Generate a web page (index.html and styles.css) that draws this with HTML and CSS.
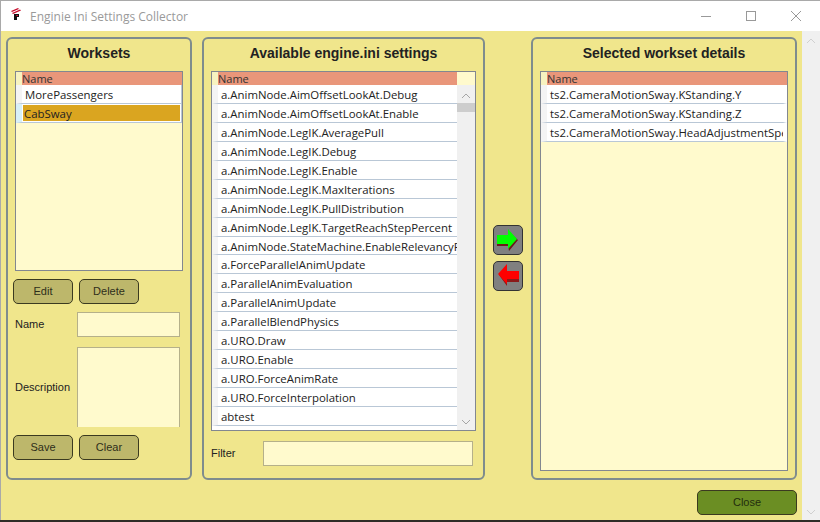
FILE: index.html
```html
<!DOCTYPE html>
<html>
<head>
  <meta name="viewport" content="width=device-width,initial-scale=1.0">
  <title>Enginie Ini Settings Collector</title>
  <link rel="stylesheet" href="styles.css">
</head>
<body>
  <div class="window">
    <div class="titlebar">
      <svg class="app-icon" width="10" height="12" viewBox="0 0 10 12">
        <path d="M0 3 L7 0 L8 1 L1 4 Z M1 5 L9 1.5 L10 2.5 L2 6 Z" fill="#c8102e"/>
        <path d="M3 6 H8 V9 H6 V12 H3 Z" fill="#111"/>
        <path d="M5 7 H7 V8 H5 Z" fill="#c8102e"/>
      </svg>
      <span class="app-title">Enginie Ini Settings Collector</span>
      <div class="caption">
        <svg width="12" height="12" viewBox="0 0 12 12"><path d="M1 6.5 H11" stroke="#999" fill="none"/></svg>
        <svg width="12" height="12" viewBox="0 0 12 12"><rect x="1.5" y="1.5" width="9" height="9" stroke="#999" fill="none"/></svg>
        <svg width="12" height="12" viewBox="0 0 12 12"><path d="M1 1 L11 11 M11 1 L1 11" stroke="#999" fill="none"/></svg>
      </div>
    </div>

    <div class="main">
      <div class="content">
        <div class="panels">
          <section class="panel panel-worksets">
            <h2>Worksets</h2>
            <div class="list list-worksets">
              <div class="list-head"><span>Name</span></div>
              <div class="row">MorePassengers</div>
              <div class="row selected"><span>CabSway</span></div>
            </div>
            <div class="btn-row">
              <button class="btn">Edit</button>
              <button class="btn">Delete</button>
            </div>
            <div class="field">
              <label>Name</label>
              <div class="input"></div>
            </div>
            <div class="field field-desc">
              <label>Description</label>
              <div class="input textarea"></div>
            </div>
            <div class="btn-row">
              <button class="btn">Save</button>
              <button class="btn">Clear</button>
            </div>
          </section>

          <section class="panel panel-available">
            <h2>Available engine.ini settings</h2>
            <div class="list list-available">
              <div class="list-body">
                <div class="list-head"><span>Name</span></div>
                <div class="row">a.AnimNode.AimOffsetLookAt.Debug</div>
                <div class="row">a.AnimNode.AimOffsetLookAt.Enable</div>
                <div class="row">a.AnimNode.LegIK.AveragePull</div>
                <div class="row">a.AnimNode.LegIK.Debug</div>
                <div class="row">a.AnimNode.LegIK.Enable</div>
                <div class="row">a.AnimNode.LegIK.MaxIterations</div>
                <div class="row">a.AnimNode.LegIK.PullDistribution</div>
                <div class="row">a.AnimNode.LegIK.TargetReachStepPercent</div>
                <div class="row">a.AnimNode.StateMachine.EnableRelevancyReset</div>
                <div class="row">a.ForceParallelAnimUpdate</div>
                <div class="row">a.ParallelAnimEvaluation</div>
                <div class="row">a.ParallelAnimUpdate</div>
                <div class="row">a.ParallelBlendPhysics</div>
                <div class="row">a.URO.Draw</div>
                <div class="row">a.URO.Enable</div>
                <div class="row">a.URO.ForceAnimRate</div>
                <div class="row">a.URO.ForceInterpolation</div>
                <div class="row">abtest</div>
              </div>
              <div class="scroll scroll-list">
                <div class="corner"></div>
                <svg class="chev" width="10" height="6" viewBox="0 0 10 6"><path d="M1 5 L5 1 L9 5" stroke="#a6a6a6" fill="none"/></svg>
                <div class="thumb"></div>
                <svg class="chev chev-down" width="10" height="6" viewBox="0 0 10 6"><path d="M1 1 L5 5 L9 1" stroke="#a6a6a6" fill="none"/></svg>
              </div>
            </div>
            <div class="field field-filter">
              <label>Filter</label>
              <div class="input"></div>
            </div>
          </section>

          <div class="arrows">
            <button class="arrow">
              <svg width="28" height="28" viewBox="0 0 28 28">
                <path d="M3 11 H14 V5 L24 14 L15 25 L14 20 H3 Z" fill="#6b1a1a"/>
                <path d="M3 9 H14 V3 L23 13 L14 23 V18 H3 Z" fill="#00ff00"/>
              </svg>
            </button>
            <button class="arrow">
              <svg width="28" height="28" viewBox="0 0 28 28">
                <path d="M25 10 H13 V3 L5 13 L13 24 V20 H25 Z" fill="#8b1a1a"/>
                <path d="M25 9 H13 V2 L4 12 L13 22 V17 H25 Z" fill="#ff0000"/>
              </svg>
            </button>
          </div>

          <section class="panel panel-selected">
            <h2>Selected workset details</h2>
            <div class="list list-selected">
              <div class="list-head"><span>Name</span></div>
              <div class="row">ts2.CameraMotionSway.KStanding.Y</div>
              <div class="row">ts2.CameraMotionSway.KStanding.Z</div>
              <div class="row">ts2.CameraMotionSway.HeadAdjustmentSpeed</div>
            </div>
          </section>
        </div>
        <div class="footer">
          <button class="btn btn-close">Close</button>
        </div>
      </div>
      <div class="scroll scroll-page">
        <svg class="chev" width="10" height="6" viewBox="0 0 10 6"><path d="M1 5 L5 1 L9 5" stroke="#d0d0d0" fill="none"/></svg>
        <svg class="chev chev-down" width="10" height="6" viewBox="0 0 10 6"><path d="M1 1 L5 5 L9 1" stroke="#d0d0d0" fill="none"/></svg>
      </div>
    </div>
  </div>
</body>
</html>
```

FILE: styles.css
```css
html, body { margin: 0; padding: 0; }
body { width: 820px; height: 522px; overflow: hidden; background: #2f2c26; font-family: "Liberation Sans", Arial, sans-serif; color: #222; }

.window { height: 520px; box-sizing: border-box; display: flex; flex-direction: column; border-top: 1px solid #a9a9a9; border-left: 1px solid #a9a9a9; background: #fff; }

.titlebar { height: 30px; flex: none; display: flex; align-items: center; background: #fff; }
.app-icon { margin-left: 10px; margin-top: -4px; }
.app-title { margin-left: 9px; font: 12px "Open Sans", sans-serif; color: #9a9a9a; }
.caption { margin-left: auto; display: flex; gap: 33px; padding-right: 18px; }

.main { flex: 1; display: flex; min-height: 0; }
.content { width: 801px; box-sizing: border-box; padding: 6px 0 0 5px; background: #f0e68c; display: flex; flex-direction: column; }

.panels { display: flex; height: 443px; align-items: stretch; }
.panel { box-sizing: border-box; border: 2px solid #7f8c8d; border-radius: 6px; padding: 0 7px; }
.panel h2 { margin: 0; height: 32px; font-size: 14px; line-height: 28px; font-weight: bold; text-align: center; color: #222; }
.panel-worksets { width: 186px; margin-right: 10px; }
.panel-available { width: 283px; }
.panel-selected { width: 266px; }

.list { box-sizing: border-box; border: 1px solid #828790; background: #fffacd; overflow: hidden; }
.list-worksets { height: 200px; margin-bottom: 8px; }
.list-available { height: 360px; display: flex; background: #fff; }
.list-selected { height: 400px; }
.list-body { flex: 1; min-width: 0; overflow: hidden; }

.list-head { height: 13px; padding-left: 6px; background: #f7f3c0; }
.list-head span { display: block; height: 13px; padding-left: 0; background: #e9967a; font: 11px/13px "Open Sans", sans-serif; color: #333; }

.row { box-sizing: border-box; height: 18.95px; padding-left: 3px; border-left: 6px solid #f4f4f4; border-bottom: 1px solid #b9c7d6; background: #fff; font: 11.4px/20px "Open Sans", sans-serif; color: #222; white-space: nowrap; overflow: hidden; }
.row.selected { padding: 1px 1px 1px 1px; border-left-color: #d8f0f8; }
.row.selected span { display: block; height: 16px; padding-left: 1px; background: #daa520; line-height: 17px; }

.list-worksets .row { border-right: 1px solid #b9c7d6; }
.list-selected .row { border-right: 4px solid #fff; }

.scroll { flex: none; display: flex; flex-direction: column; align-items: center; background: #f0f0f0; }
.scroll-list { width: 18px; }
.corner { width: 100%; height: 13px; background: #fffacd; }
.scroll-list .chev { margin-top: 8px; }
.thumb { width: 100%; height: 9px; margin-top: 4px; background: #cdcdcd; }
.chev-down { margin-top: auto !important; margin-bottom: 5px; }
.scroll-page { width: 18px; }
.scroll-page .chev { margin-top: 7px; }

.btn-row { display: flex; gap: 6px; margin-left: -2px; }
.btn { width: 60px; height: 25px; padding: 0 0 2px; border: 1px solid #3b3a20; border-radius: 5px; background: #bdb76b; font: 11px "Liberation Sans", Arial, sans-serif; color: #2e2e1a; }

.field { display: flex; align-items: center; margin: 8px 0 10px; }
.field label { width: 62px; margin-top: -2px; font-size: 11px; color: #222; }
.input { box-sizing: border-box; width: 103px; height: 25px; border: 1px solid #b5b08a; background: #fffacd; }
.textarea { height: 80px; border-bottom: none; }
.field-desc { margin: 0 0 8px; }
.field-desc label { margin-top: 0; }
.field-filter { margin: 10px 0 0; }
.field-filter label { width: 52px; }
.field-filter .input { width: 210px; }

.arrows { width: 46px; display: flex; flex-direction: column; align-items: center; padding-top: 188px; gap: 6px; box-sizing: border-box; }
.arrow { width: 30px; height: 30px; padding: 0; display: flex; align-items: center; justify-content: center; border: 1px solid #333; border-radius: 5px; background: #808080; }

.footer { display: flex; justify-content: flex-end; padding: 10px 5px 0 0; }
.btn-close { width: 100px; background: #6b8e23; color: #232d0e; }
```
